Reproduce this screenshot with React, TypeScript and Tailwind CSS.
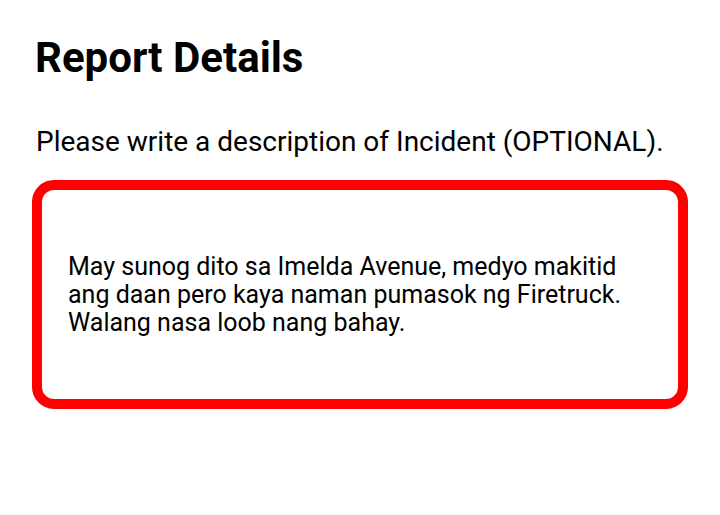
export default function App() {
  return (
    <div className="min-h-[515px] w-[720px] bg-white px-[32px] pt-[34px] font-['Roboto',sans-serif] text-black">
      <h1 className="pl-[3px] text-[42px] leading-[48px] font-bold">Report Details</h1>
      <p className="mt-[42px] pl-[4px] text-[28px] leading-[36px]">
        Please write a description of Incident (OPTIONAL).
      </p>
      <div className="mt-[20px] flex h-[229px] w-[656px] items-center rounded-[22px] border-[10px] border-[#ff0000] px-[26px]">
        <p className="text-[25px] leading-[28px]">
          May sunog dito sa Imelda Avenue, medyo makitid ang daan pero kaya naman pumasok ng Firetruck.
          Walang nasa loob nang bahay.
        </p>
      </div>
    </div>
  );
}
